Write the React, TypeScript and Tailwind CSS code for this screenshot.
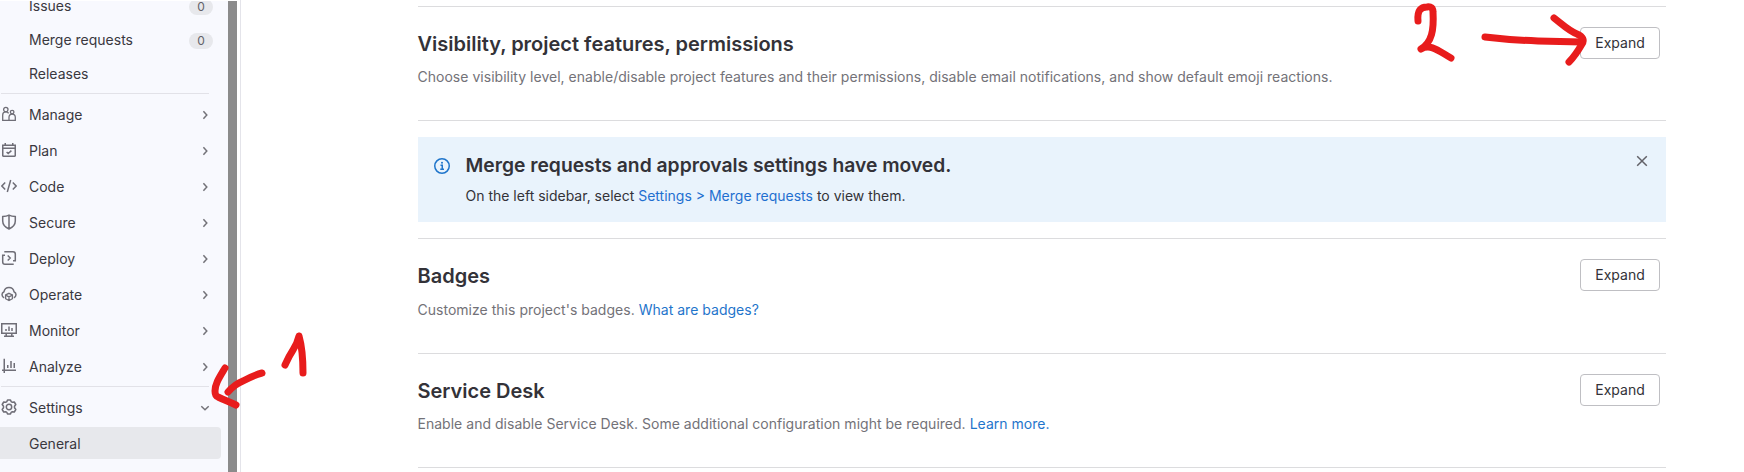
import type { ReactNode } from 'react';

const stroke = {
  fill: 'none',
  stroke: 'currentColor',
  strokeWidth: 1.5,
} as const;

function Icon({ children }: { children: ReactNode }) {
  return (
    <svg viewBox="0 0 16 16" className="h-4 w-4 shrink-0 text-[#6f6e77]" {...stroke}>
      {children}
    </svg>
  );
}

const navItems: { label: string; icon: ReactNode }[] = [
  {
    label: 'Manage',
    icon: (
      <Icon>
        <path strokeWidth="1.3" d="M8 13.9V11.2a3.15 3.15 0 0 1 6.3 0v3.1H1.7V8.9a3.15 3.15 0 0 1 5.9-1.5M8 11v3.3" />
        <circle cx="4.8" cy="3.6" r="2.2" strokeWidth="1.3" />
        <circle cx="11.15" cy="6.1" r="1.8" strokeWidth="1.3" />
      </Icon>
    ),
  },
  {
    label: 'Plan',
    icon: (
      <Icon>
        <path d="M1.75 3.25h12.5v10.4a.6.6 0 0 1-.6.6H2.35a.6.6 0 0 1-.6-.6zM1.75 6.25h12.5M4.25 1v3M11.75 1v3M5.6 10l1.6 1.5L10.4 8.6" />
      </Icon>
    ),
  },
  {
    label: 'Code',
    icon: (
      <Icon>
        <path d="M9.7 2 6.3 14M4.2 4.6.9 8l3.3 3.4M11.8 4.6 15.1 8l-3.3 3.4" />
      </Icon>
    ),
  },
  {
    label: 'Secure',
    icon: (
      <Icon>
        <path d="M8 1.1c-2 .9-4.2 1.3-6.3 1.5V7c0 3.6 2.4 6.2 6.3 8 3.9-1.8 6.3-4.4 6.3-8V2.6C12.2 2.4 10 2 8 1.1zM8 1v14" />
      </Icon>
    ),
  },
  {
    label: 'Deploy',
    icon: (
      <Icon>
        <path d="M3.3 1.75h8.7a2.3 2.3 0 0 1 2.3 2.3v6.8h-2.3M12.7 14.25H4a2.3 2.3 0 0 1-2.3-2.3v-6.8H4M6.7 5.5 9.2 8l-2.5 2.5" />
      </Icon>
    ),
  },
  {
    label: 'Operate',
    icon: (
      <Icon>
        <path d="M3.2 11.7A3.2 3.2 0 0 1 3 5.7 5.1 5.1 0 0 1 13 5.7a3.2 3.2 0 0 1-.2 6" />
        <path strokeWidth="1.3" d="m8 7.3 3.4 1.7v3.7L8 14.6l-3.4-1.9V9zM4.6 9 8 10.9 11.4 9M8 10.9v3.7" />
      </Icon>
    ),
  },
  {
    label: 'Monitor',
    icon: (
      <Icon>
        <path d="M.75 1.75h14.5v9.5H.75zM5.2 11.25v2.5M10.8 11.25v2.5M3 14.25h10M5 7v2M8 4.5V9M11 6v3" />
      </Icon>
    ),
  },
  {
    label: 'Analyze',
    icon: (
      <Icon>
        <path d="M3.25.8v14.2M1 12.25h14M6.75 7v3M10 3v7M13.25 5v5" />
      </Icon>
    ),
  },
];

function Chevron({ down = false }: { down?: boolean }) {
  return (
    <svg viewBox="0 0 16 16" className="h-4 w-4 shrink-0 text-[#737278]" {...stroke}>
      <path d={down ? 'm4.3 6.3 3.7 3.4 3.7-3.4' : 'M6.4 4.3 9.8 8l-3.4 3.7'} />
    </svg>
  );
}

function PinnedItem({ label, count }: { label: string; count?: number }) {
  return (
    <div className="flex h-[34px] items-center justify-between pl-[29px] pr-[15px]">
      <span>{label}</span>
      {count !== undefined && (
        <span className="mt-0.5 flex h-4 w-6 items-center justify-center rounded-full bg-[#e7e8ec] text-xs text-[#626168]">
          {count}
        </span>
      )}
    </div>
  );
}

function Sidebar() {
  return (
    <nav className="flex w-[228px] shrink-0 flex-col overflow-hidden border-t border-white bg-[#f8f9fe] text-[#3a383f]">
      <div className="-mt-[12px] h-[104px]">
        <PinnedItem label="Issues" count={0} />
        <PinnedItem label="Merge requests" count={0} />
        <PinnedItem label="Releases" />
      </div>
      <div className="ml-px mr-[19px] h-px shrink-0 bg-[#e2e2e8]" />
      <div className="mt-[3px]">
        {navItems.map(({ label, icon }) => (
          <div key={label} className="flex h-9 items-center gap-3 pl-px pr-[15px]">
            <span className="-mt-0.5">{icon}</span>
            <span className="flex-1">{label}</span>
            <Chevron />
          </div>
        ))}
      </div>
      <div className="ml-px mr-[19px] mt-px h-px shrink-0 bg-[#e2e2e8]" />
      <div className="mt-[3px] flex h-9 shrink-0 items-center gap-3 pl-px pr-[15px]">
        <span className="-mt-0.5">
          <Icon>
            <path
              strokeLinejoin="round"
              d="M6.5.9h3l.7 1.8 1.1.6 2-.3 1.500 2.500L13.500 7.300v1.400l1.300 1.800-1.500 2.500-2-.300-1.100.600-.700 1.800h-3l-.700-1.800-1.100-.600-2 .300-1.500-2.500L2.500 8.700V7.300L1.200 5.500 2.700 3l2 .300 1.100-.600z"
            />
            <circle cx="8" cy="8" r="2.7" />
          </Icon>
        </span>
        <span className="flex-1">Settings</span>
        <Chevron down />
      </div>
      <div className="mr-[7px] mt-px flex h-8 shrink-0 items-center rounded-r bg-[#e7e8ec] pl-[29px] pt-px">General</div>
    </nav>
  );
}

type SectionProps = { title: string; height: string; gap?: string; children: ReactNode };

function Section({ title, height, gap = 'mt-2', children }: SectionProps) {
  return (
    <section className={`flex shrink-0 justify-between border-t border-[#dcdcde] pr-1.5 pt-5 ${height}`}>
      <div className="-ml-[0.5px]">
        <h2 className="mt-0.5 text-[20px] font-semibold leading-[30px] text-[#333238]">{title}</h2>
        <p className={`leading-5 tracking-[0.02px] text-[#737278] ${gap}`}>{children}</p>
      </div>
      <button className="h-8 w-20 rounded border border-[#bfbfc3] bg-white text-[#333238]">Expand</button>
    </section>
  );
}

function Alert() {
  return (
    <div className="mt-4 mb-4 flex h-[85px] shrink-0 bg-[#e9f3fc] pl-4 pr-4">
      <svg viewBox="0 0 16 16" className="mt-[21px] h-4 w-4 shrink-0 text-[#1f75cb]" {...stroke}>
        <circle cx="8" cy="8" r="7.25" />
        <path d="M6.5 7.25H8.25V11.25M6.25 11.25h3.75" />
        <circle cx="8" cy="4.8" r="1" fill="currentColor" stroke="none" />
      </svg>
      <div className="ml-[15.5px] flex-1 text-[#333238]">
        <h2 className="mt-[13px] text-[19.3px] font-semibold leading-[30px]">
          Merge requests and approvals settings have moved.
        </h2>
        <p className="mt-[6px] leading-5">
          On the left sidebar, select <a className="text-[#1f6fd0]">Settings &gt; Merge requests</a> to view them.
        </p>
      </div>
      <svg viewBox="0 0 16 16" className="mt-4 h-4 w-4 shrink-0 text-[#626168]" {...stroke}>
        <path d="m3.2 3.2 9.6 9.6M12.8 3.2l-9.6 9.6" />
      </svg>
    </div>
  );
}

function Annotations() {
  return (
    <svg
      viewBox="0 0 1744 472"
      className="pointer-events-none absolute inset-0 h-[472px] w-[1744px] text-[#e81c1c]"
      fill="none"
      stroke="currentColor"
      strokeWidth="7"
      strokeLinecap="round"
      strokeLinejoin="round"
    >
      <path d="M225 368C219 378 215 384 215 391Q215 396 218 397C224 400 230 402 236 405" />
      <path d="M228 392Q235 384 243 381Q254 375 262 373" />
      <path d="M285 365Q289 356 293 350Q297 344 299 336Q303 350 303 373" />
      <path d="M1418 21C1417 10 1421 7 1427 7Q1433 6 1433 12C1434 30 1432 42 1421 49C1431 43 1440 52 1451 58" />
      <path d="M1485 37Q1510 40 1538 41L1582 42" />
      <path d="M1554 18C1563 25 1569 31 1577 34Q1586 38 1582 44C1578 51 1575 56 1569 62" />
    </svg>
  );
}

export default function App() {
  return (
    <div className="relative flex h-[472px] w-[1744px] overflow-hidden bg-white font-['Inter',sans-serif] text-sm">
      <Sidebar />
      <div className="mt-px w-[9px] shrink-0 bg-[#8b8b8b]" />
      <div className="ml-[3px] w-px shrink-0 bg-[#e4e4ea]" />
      <main className="ml-[177px] flex w-[1248px] flex-col pt-1.5">
        <Section title="Visibility, project features, permissions" height="h-[114px]">
          Choose visibility level, enable/disable project features and their permissions, disable email notifications,
          and show default emoji reactions.
        </Section>
        <div className="h-px shrink-0 bg-[#dcdcde]" />
        <Alert />
        <Section title="Badges" height="h-[115px]" gap="mt-[9px]">
          Customize this project's badges. <a className="text-[#1f75cb]">What are badges?</a>
        </Section>
        <Section title="Service Desk" height="h-[114px]">
          Enable and disable Service Desk. Some additional configuration might be required.{' '}
          <a className="text-[#1f75cb]">Learn more.</a>
        </Section>
        <div className="h-px shrink-0 bg-[#dcdcde]" />
      </main>
      <Annotations />
    </div>
  );
}
